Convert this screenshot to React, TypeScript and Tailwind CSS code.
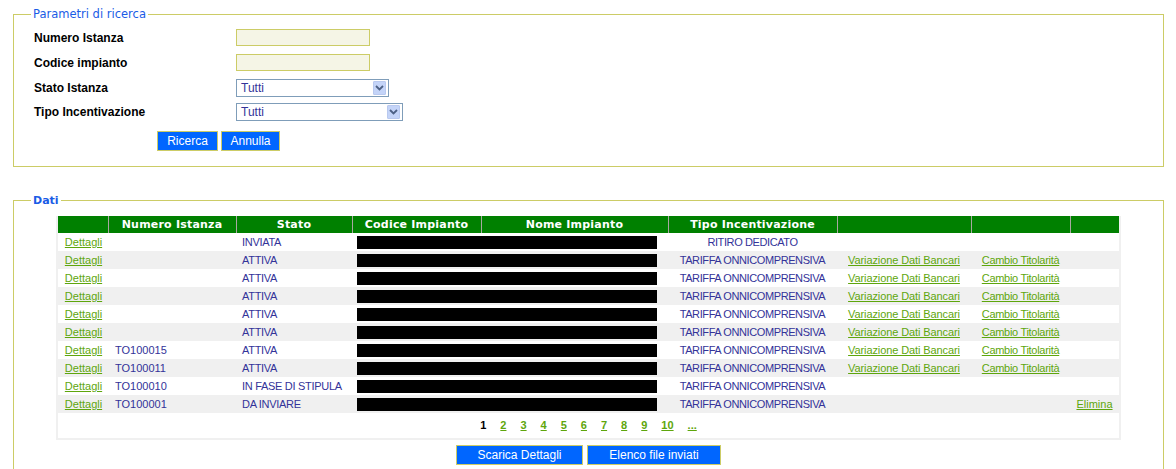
import React from 'react';

type Row = {
  num: string;
  stato: string;
  tipo: string;
  links: boolean;
  elimina?: boolean;
};

const rows: Row[] = [
  { num: '', stato: 'INVIATA', tipo: 'RITIRO DEDICATO', links: false },
  { num: '', stato: 'ATTIVA', tipo: 'TARIFFA ONNICOMPRENSIVA', links: true },
  { num: '', stato: 'ATTIVA', tipo: 'TARIFFA ONNICOMPRENSIVA', links: true },
  { num: '', stato: 'ATTIVA', tipo: 'TARIFFA ONNICOMPRENSIVA', links: true },
  { num: '', stato: 'ATTIVA', tipo: 'TARIFFA ONNICOMPRENSIVA', links: true },
  { num: '', stato: 'ATTIVA', tipo: 'TARIFFA ONNICOMPRENSIVA', links: true },
  { num: 'TO100015', stato: 'ATTIVA', tipo: 'TARIFFA ONNICOMPRENSIVA', links: true },
  { num: 'TO100011', stato: 'ATTIVA', tipo: 'TARIFFA ONNICOMPRENSIVA', links: true },
  { num: 'TO100010', stato: 'IN FASE DI STIPULA', tipo: 'TARIFFA ONNICOMPRENSIVA', links: false },
  { num: 'TO100001', stato: 'DA INVIARE', tipo: 'TARIFFA ONNICOMPRENSIVA', links: false, elimina: true },
];

const cols = [50, 128, 116, 129, 187, 169, 134, 99, 49];
const headers = ['', 'Numero Istanza', 'Stato', 'Codice Impianto', 'Nome Impianto', 'Tipo Incentivazione', '', '', ''];
const pages = ['2', '3', '4', '5', '6', '7', '8', '9', '10', '...'];

function Legend({ children, bold }: { children: React.ReactNode; bold?: boolean }) {
  return (
    <legend
      className={`ml-[17px] px-[2px] leading-[15px] text-[#1a5ce6] font-['DejaVu_Sans',Tahoma,sans-serif] ${
        bold ? 'text-[11px] font-bold' : 'text-[11.5px]'
      }`}
    >
      {children}
    </legend>
  );
}

function Select({ width }: { width: string }) {
  return (
    <div className={`flex h-[18px] items-center border border-[#7f9db9] bg-white pl-[4px] pr-[2px] ${width}`}>
      <span className="flex-1 text-[12px] leading-none text-[#333399]">Tutti</span>
      <span className="flex h-[14px] w-[13px] items-center justify-center rounded-[1px] border border-[#b9c9ef] bg-[#c4d4f8]">
        <svg width="9" height="6" viewBox="0 0 9 6">
          <path d="M1 1 L4.5 4.5 L8 1" fill="none" stroke="#4d6185" strokeWidth="1.8" />
        </svg>
      </span>
    </div>
  );
}

function FormRow({ label, h, children }: { label: string; h: string; children: React.ReactNode }) {
  return (
    <div className={`flex items-center ${h}`}>
      <div className="w-[202px] text-[12px] font-bold text-black">{label}</div>
      {children}
    </div>
  );
}

function Link({ children, className = '' }: { children: React.ReactNode; className?: string }) {
  return <a className={`cursor-pointer text-[#5ea60c] underline ${className}`}>{children}</a>;
}

export default function App() {
  return (
    <div className="min-h-[469px] bg-white pt-[7px] font-['Liberation_Sans',Arial,sans-serif]">
      <fieldset className="ml-[13px] w-[1151px] border border-[#cccc66] pb-[15px]">
        <Legend>Parametri di ricerca</Legend>
        <div className="pl-[20px] pt-[3px]">
          <FormRow label="Numero Istanza" h="h-[25px]">
            <input className="h-[17px] w-[134px] border border-[#cccc66] bg-[#f5f5e6] outline-none" />
          </FormRow>
          <FormRow label="Codice impianto" h="h-[25px]">
            <input className="h-[17px] w-[134px] border border-[#cccc66] bg-[#f5f5e6] outline-none" />
          </FormRow>
          <FormRow label="Stato Istanza" h="h-[26px]">
            <Select width="w-[153px]" />
          </FormRow>
          <FormRow label="Tipo Incentivazione" h="h-[22px]">
            <Select width="w-[167px]" />
          </FormRow>
          <div className="mt-[8px] flex gap-[3px] pl-[123px]">
            <button className="h-[20px] w-[61px] border border-[#cccc66] bg-[#0066ff] text-[12px] text-white">
              Ricerca
            </button>
            <button className="h-[20px] w-[59px] border border-[#cccc66] bg-[#0066ff] text-[12px] text-white">
              Annulla
            </button>
          </div>
        </div>
      </fieldset>

      <fieldset className="ml-[13px] mt-[26px] w-[1151px] border border-[#cccc66] pb-[40px]">
        <Legend bold>Dati</Legend>
        <div className="ml-[42px] mt-[8px] w-[1065px] border-x-2 border-b-2 border-[#f0f0f0]">
          <table className="w-[1061px] table-fixed border-collapse">
            <colgroup>
              {cols.map((w, i) => (
                <col key={i} style={{ width: w }} />
              ))}
            </colgroup>
            <thead>
              <tr className="h-[17px] bg-[#008000]">
                {headers.map((h, i) => (
                  <th
                    key={i}
                    className={`p-0 text-center text-[11px] font-bold leading-[17px] tracking-[0.2px] text-white font-['DejaVu_Sans',Verdana,sans-serif] ${
                      i > 0 ? 'border-l border-[#a8a8a0]' : ''
                    }`}
                  >
                    {h}
                  </th>
                ))}
              </tr>
            </thead>
            <tbody className="text-[11px] text-[#333399]">
              {rows.map((r, i) => (
                <tr key={i} className={`h-[18px] ${i % 2 ? 'bg-[#f0f0f0]' : 'bg-white'}`}>
                  <td className="p-0 pl-[1px] text-center">
                    <Link>Dettagli</Link>
                  </td>
                  <td className="whitespace-nowrap p-0 pl-[7px]">{r.num}</td>
                  <td className="whitespace-nowrap p-0 pl-[6px] tracking-[-0.3px]">{r.stato}</td>
                  <td className="whitespace-nowrap p-0 pl-[5px]">
                    <span className="inline-block h-[13px] w-[300px] bg-black align-middle" />
                  </td>
                  <td className="p-0" />
                  <td className="whitespace-nowrap p-0 text-center tracking-[-0.4px]">{r.tipo}</td>
                  <td className="whitespace-nowrap p-0 text-center tracking-[-0.1px]">
                    {r.links && <Link>Variazione Dati Bancari</Link>}
                  </td>
                  <td className="whitespace-nowrap p-0 text-center tracking-[-0.3px]">
                    {r.links && <Link>Cambio Titolarità</Link>}
                  </td>
                  <td className="whitespace-nowrap p-0 text-center">{r.elimina && <Link>Elimina</Link>}</td>
                </tr>
              ))}
              <tr className="h-[25px] bg-white">
                <td colSpan={9} className="p-0">
                  <div className="flex justify-center gap-[14px] text-[11px] font-bold">
                    <span className="text-black">1</span>
                    {pages.map((p) => (
                      <Link key={p}>{p}</Link>
                    ))}
                  </div>
                </td>
              </tr>
            </tbody>
          </table>
        </div>
        <div className="ml-[42px] mt-[5px] flex w-[1065px] justify-center gap-[4px]">
          <button className="h-[20px] w-[127px] border border-[#cccc66] bg-[#0066ff] text-[12px] text-white">
            Scarica Dettagli
          </button>
          <button className="h-[20px] w-[134px] border border-[#cccc66] bg-[#0066ff] text-[12px] text-white">
            Elenco file inviati
          </button>
        </div>
      </fieldset>
    </div>
  );
}
